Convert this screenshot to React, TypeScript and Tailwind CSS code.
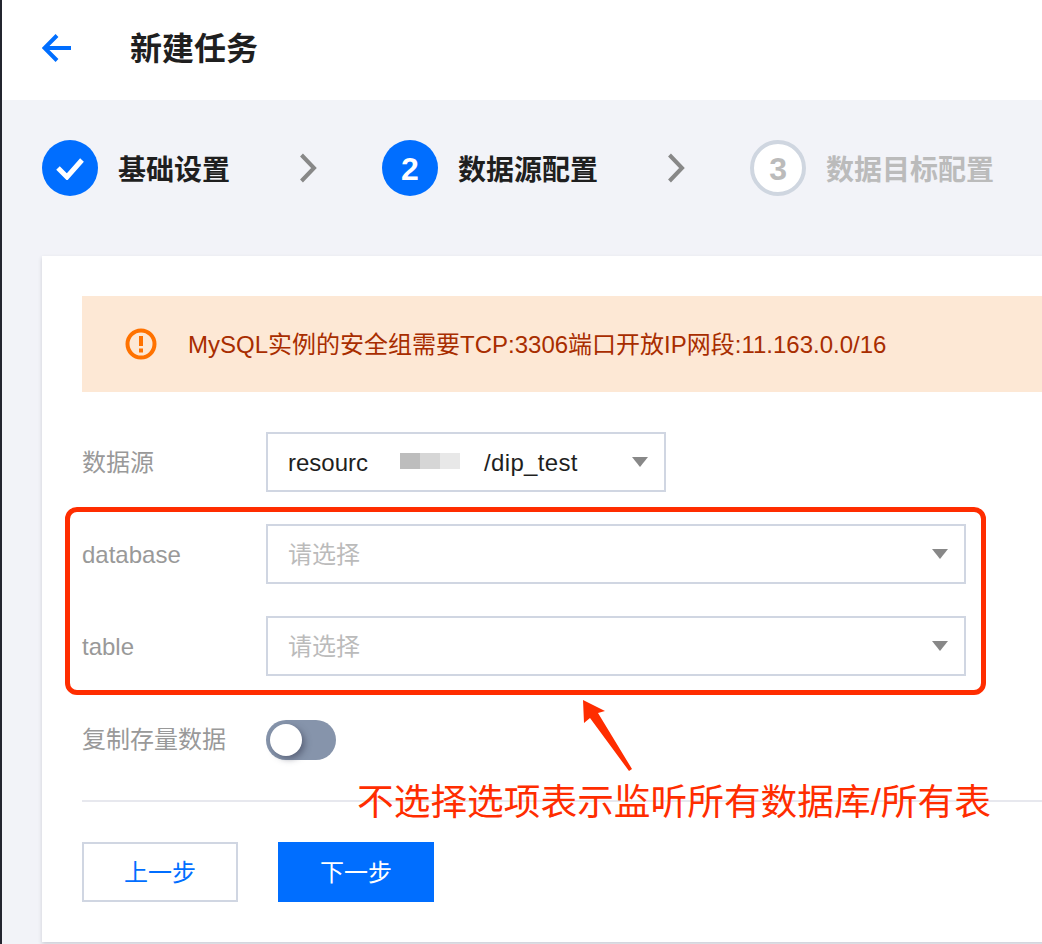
import React from "react";

const sans = "font-['Liberation_Sans','Noto_Sans_CJK_SC',sans-serif]";

const Chevron = () => (
  <svg width="18" height="30" viewBox="0 0 18 30" fill="none" className="shrink-0">
    <path d="M2.5 2 L15 15 L2.5 28" stroke="#888888" strokeWidth="4" />
  </svg>
);

const Caret = () => (
  <svg width="16" height="10" viewBox="0 0 16 10" className="shrink-0">
    <path d="M0 0 H16 L8 10 Z" fill="#888888" />
  </svg>
);

const FormRow: React.FC<{ label: string; children: React.ReactNode }> = ({ label, children }) => (
  <div className="flex items-center">
    <label className="w-[184px] shrink-0 pt-[2px] text-[24px] leading-[32px] text-[#999999]">{label}</label>
    {children}
  </div>
);

const Placeholder = () => (
  <div className="flex h-[60px] w-[700px] items-center justify-between border-2 border-[#d0d6e2] pl-[20px] pr-[16px] text-[24px] text-[#bbbbbb]">
    <span className="pt-[2px]">请选择</span>
    <Caret />
  </div>
);

export default function App() {
  return (
    <div className={`${sans} relative flex h-[944px] w-[1042px] overflow-hidden bg-[#f2f3f8]`}>
      <div className="w-[2px] shrink-0 bg-[#23252f]" />
      <div className="flex min-w-0 flex-1 flex-col">
        <header className="flex h-[100px] shrink-0 items-center bg-white pl-[40px]">
          <svg width="30" height="30" viewBox="0 0 30 30" fill="none" className="mr-[58px] mt-[-4px]">
            <path d="M29 15 H3 M15 2.5 L2.5 15 L15 27.5" stroke="#006eff" strokeWidth="4" />
          </svg>
          <h1 className="mt-[-2px] text-[32px] font-bold leading-[40px] text-[#1f1f1f]">新建任务</h1>
        </header>

        <div className="flex h-[156px] shrink-0 items-start pl-[40px] pt-[40px] text-[28px] font-bold">
          <div className="flex h-[56px] w-[56px] items-center justify-center rounded-full bg-[#006eff]">
            <svg width="30" height="24" viewBox="0 0 30 24" fill="none">
              <path d="M3 12 L12 21 L27 4" stroke="#ffffff" strokeWidth="5" />
            </svg>
          </div>
          <span className="ml-[20px] pt-[10px] text-[#1f1f1f]">基础设置</span>
          <div className="ml-[69px] pt-[13px]"><Chevron /></div>
          <div className="ml-[65px] flex h-[56px] w-[56px] items-center justify-center rounded-full bg-[#006eff] pt-[2px] text-[32px] text-white">2</div>
          <span className="ml-[20px] pt-[10px] text-[#1f1f1f]">数据源配置</span>
          <div className="ml-[69px] pt-[13px]"><Chevron /></div>
          <div className="ml-[65px] flex h-[56px] w-[56px] items-center justify-center rounded-full border-4 border-[#cfd6e0] bg-white pt-[2px] text-[32px] text-[#bbbbbb]">3</div>
          <span className="ml-[20px] pt-[10px] text-[#bbbbbb]">数据目标配置</span>
        </div>

        <main className="ml-[40px] h-[686px] w-[1100px] shrink-0 bg-white pl-[40px] pt-[40px] shadow-[0_2px_4px_rgba(54,58,80,0.2)]">
          <div className="flex h-[96px] items-center bg-[#fde8d5] pl-[43px]">
            <svg width="32" height="32" viewBox="0 0 32 32" fill="none" className="mr-[31px] shrink-0">
              <circle cx="16" cy="16" r="13.5" stroke="#ff7200" strokeWidth="4" />
              <path d="M16 8 V18" stroke="#ff7200" strokeWidth="4" />
              <rect x="14" y="20.5" width="4" height="4" fill="#ff7200" />
            </svg>
            <p className="pt-[2px] text-[24px] text-[#a82d00]">MySQL实例的安全组需要TCP:3306端口开放IP网段:11.163.0.0/16</p>
          </div>

          <div className="mt-[40px] flex w-[884px] flex-col gap-[32px]">
            <FormRow label="数据源">
              <div className="flex h-[60px] w-[400px] items-center border-2 border-[#d0d6e2] pl-[20px] pr-[16px] pt-[2px] text-[24px] text-[#1f1f1f]">
                <span className="w-[79px] whitespace-nowrap">resourc</span>
                <div className="ml-[33px] mt-[-4px] flex h-[16px] w-[60px]">
                  <div className="flex-1 bg-[#bdbdbd]" />
                  <div className="flex-1 bg-[#d6d6d6]" />
                  <div className="flex-1 bg-[#e8e8e8]" />
                </div>
                <span className="ml-[24px] whitespace-nowrap tracking-[0.35px]">/dip_test</span>
                <div className="ml-auto mt-[-2px]"><Caret /></div>
              </div>
            </FormRow>
            <FormRow label="database">
              <Placeholder />
            </FormRow>
            <FormRow label="table">
              <Placeholder />
            </FormRow>
          </div>

          <div className="mt-[44px] flex items-center">
            <label className="w-[184px] shrink-0 text-[24px] leading-[32px] text-[#999999]">复制存量数据</label>
            <div className="flex h-[40px] w-[70px] items-center rounded-full bg-[#8694ab] pl-[4px]">
              <div className="h-[32px] w-[32px] rounded-full bg-white shadow-[3px_3px_6px_rgba(54,58,80,0.5)]" />
            </div>
          </div>

          <div className="mt-[40px] h-[2px] bg-[#e7e8ee]" />

          <div className="mt-[40px] flex gap-[40px] text-[24px]">
            <button className="h-[60px] w-[156px] border-2 border-[#d0d6e2] bg-white pt-[1px] text-[#006eff]">上一步</button>
            <button className="h-[60px] w-[156px] bg-[#006eff] pt-[1px] text-white">下一步</button>
          </div>
        </main>
      </div>

      {/* red annotation drawn over the screenshot */}
      <div className="absolute left-[65px] top-[507px] h-[188px] w-[921px] rounded-[12px] border-[5px] border-[#ff2d00]" />
      <svg width="60" height="80" viewBox="0 0 60 80" className="absolute left-[580px] top-[696px]">
        <path d="M3 4 L25 15 L18 17 L52 73 L49 75 L10 22 L4 27 Z" fill="#ff2d00" />
      </svg>
      <p className="absolute left-[357px] top-[778px] whitespace-nowrap text-[36.7px] leading-[50px] text-[#ff2d00]">
        不选择选项表示监听所有数据库/所有表
      </p>
    </div>
  );
}
